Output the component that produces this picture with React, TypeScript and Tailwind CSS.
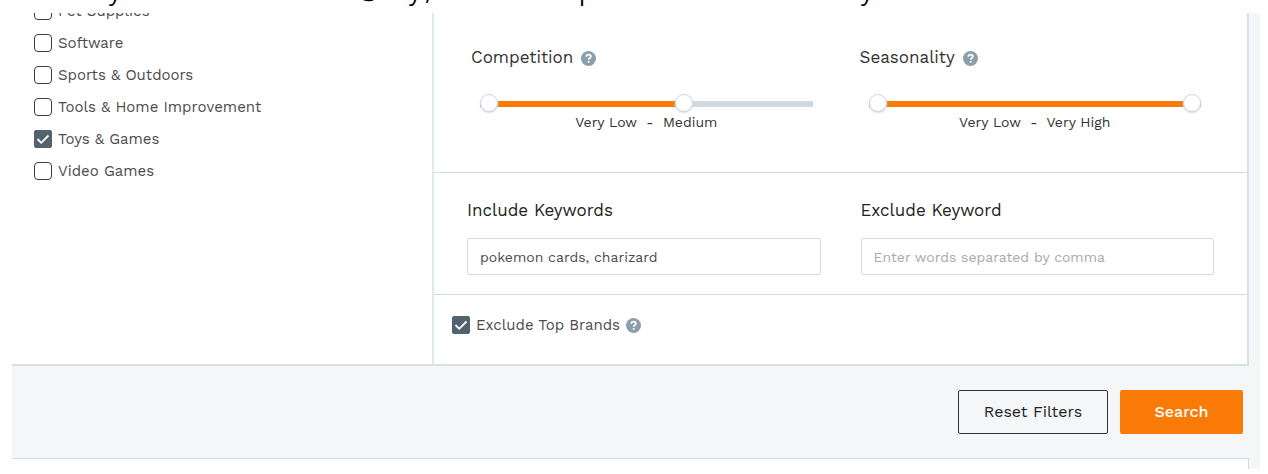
import { useState } from "react";

function Help({ label }: { label: string }) {
  return (
    <button type="button" aria-label={label} className="flex size-[15px] shrink-0 items-center justify-center rounded-full bg-[#8a9fa9] text-white">
      <svg viewBox="0 0 16 16" className="size-[15px]" fill="none" stroke="currentColor" strokeWidth="1.9">
        <path d="M5.6 6.2C5.7 4.7 6.700 3.900 8.100 3.900C9.500 3.900 10.500 4.700 10.500 5.900C10.500 7.400 8.200 7.500 8.200 9.400" />
        <path d="M8.200 10.700V12.500" />
      </svg>
    </button>
  );
}

function Check({ label, on = false }: { label: string; on?: boolean }) {
  const [checked, setChecked] = useState(on);
  return (
    <label className="flex h-8 items-center gap-1.5 text-[15px] text-[#4c4c4c]">
      <span className="relative flex size-[18px] shrink-0">
        <input
          type="checkbox"
          checked={checked}
          onChange={(e) => setChecked(e.target.checked)}
          className="peer size-[18px] appearance-none rounded border border-[#3c3c3c] bg-white checked:rounded-xs checked:border-[#52636d] checked:bg-[#52636d]"
        />
        <svg viewBox="0 0 18 18" className="pointer-events-none absolute inset-0 hidden size-[18px] peer-checked:block" fill="none" stroke="white" strokeWidth="1.8">
          <path d="M3.500 9L7.200 12.800L14.500 5.500" />
        </svg>
      </span>
      {label}
    </label>
  );
}

const thumb =
  "pointer-events-none absolute inset-x-0 top-0 h-[18px] w-full appearance-none bg-transparent [&::-webkit-slider-thumb]:pointer-events-auto [&::-webkit-slider-thumb]:size-[18px] [&::-webkit-slider-thumb]:appearance-none [&::-webkit-slider-thumb]:rounded-full [&::-webkit-slider-thumb]:border [&::-webkit-slider-thumb]:border-[#cfd8de] [&::-webkit-slider-thumb]:bg-white [&::-webkit-slider-thumb]:shadow-[0_1px_2px_#d5d5f0]";

function Range({ title, high, text }: { title: string; high: number; text: string }) {
  const [lo, setLo] = useState(0);
  const [hi, setHi] = useState(high);
  return (
    <div>
      <div className="flex h-6 items-center gap-2 text-[17px] text-[#333]">
        {title}
        <Help label={`About ${title}`} />
      </div>
      <div className="mr-[17px] ml-[9px] pt-6">
        <div className="relative flex h-[18px] items-center">
          <div className="mt-0.5 h-1.5 w-full bg-[#cfd8de]">
            <div className="h-full bg-[#f97a06]" style={{ marginLeft: `${lo}%`, width: `${hi - lo}%` }} />
          </div>
          <input type="range" aria-label={`${title} minimum`} value={lo} onChange={(e) => setLo(Math.min(+e.target.value, hi))} className={thumb} />
          <input type="range" aria-label={`${title} maximum`} value={hi} onChange={(e) => setHi(Math.max(+e.target.value, lo))} className={thumb} />
        </div>
        <p className="text-center text-sm leading-5 whitespace-pre text-[#333]">{text}</p>
      </div>
    </div>
  );
}

function Field({ label, value, placeholder }: { label: string; value?: string; placeholder?: string }) {
  return (
    <label className="block text-[17px] leading-6 text-[#222]">
      {label}
      <input
        type="text"
        defaultValue={value}
        placeholder={placeholder}
        className="mt-4 block h-[37px] w-full rounded-xs border border-[#d0dbe1] bg-white px-3 text-sm text-[#4c4c4c] placeholder:text-[#a9a9a9]"
      />
    </label>
  );
}

export default function App() {
  return (
    <div className="bg-white font-['Work_Sans','Open_Sans',sans-serif]">
      <div className="flex h-[13px] overflow-hidden pl-[109px] font-['Open_Sans',sans-serif] text-2xl leading-6 text-black">
        <p className="-mt-[21px] flex">
          <span className="w-[249px]">y</span>
          <span className="w-[51px]">@</span>
          <span className="w-4">y</span>
          <span className="w-[154px]">,</span>
          <span className="w-[282px]">p</span>
          <span>y</span>
        </p>
      </div>
      <main className="mr-2 ml-3 bg-[#f5f6f8]">
        <section className="mr-[11px] flex border-r-2 border-b-2 border-[#d9e1e5] bg-white">
          <div className="w-[420px] shrink-0 overflow-hidden pl-[22px]">
            <div className="-mt-[18px]">
              <Check label="Pet Supplies" />
              <Check label="Software" />
              <Check label="Sports & Outdoors" />
              <Check label="Tools & Home Improvement" />
              <Check label="Toys & Games" on />
              <Check label="Video Games" />
            </div>
          </div>
          <div className="min-w-0 grow border-l-2 border-[#e1e8eb]">
            <div className="grid h-40 grid-cols-2 gap-x-[30px] border-b border-[#d0dbe1] pt-[33px] pr-[29px] pl-[37px]">
              <Range title="Competition" high={62} text="Very Low  -  Medium" />
              <Range title="Seasonality" high={100} text="Very Low  -  Very High" />
            </div>
            <div className="grid grid-cols-2 gap-x-10 border-b border-[#d0dbe1] px-[33px] pt-[25px] pb-[19px]">
              <Field label="Include Keywords" value="pokemon cards, charizard" />
              <Field label="Exclude Keyword" placeholder="Enter words separated by comma" />
            </div>
            <div className="flex h-[69px] items-start gap-1.5 pt-3.5 pl-[18px]">
              <Check label="Exclude Top Brands" on />
              <div className="flex h-8 items-center"><Help label="About Exclude Top Brands" /></div>
            </div>
          </div>
        </section>
        <div className="flex justify-end gap-3 py-6 pr-[17px]">
          <button type="button" className="h-11 w-[150px] rounded-xs border border-[#333] text-base text-[#222]">Reset Filters</button>
          <button type="button" className="h-11 w-[123px] rounded-xs bg-[#f97a06] text-base font-medium text-white">Search</button>
        </div>
        <div className="mr-[11px] h-[11px] border-t border-r border-[#d0dbe1] bg-white" />
      </main>
    </div>
  );
}
